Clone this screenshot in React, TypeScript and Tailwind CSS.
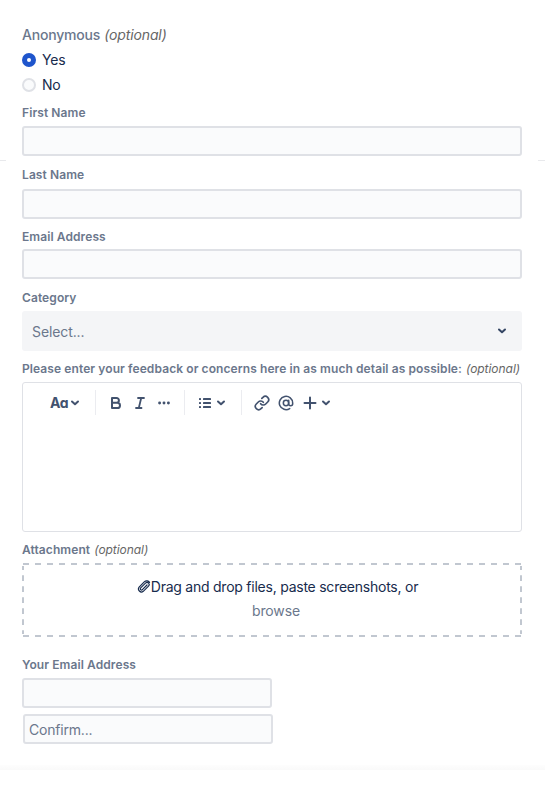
import React from "react";

function Label({ text, optional, className = "" }: { text: string; optional?: boolean; className?: string }) {
  return (
    <div className={`flex h-4 items-center gap-1 whitespace-nowrap text-[12px] leading-4 text-[#6b778c] ${className}`}>
      <span className="font-semibold tracking-[0.09px]">{text}</span>
      {optional && <span className="italic text-[#666] tracking-[-0.05px]">(optional)</span>}
    </div>
  );
}

function Field({ className = "", placeholder, label }: { className?: string; placeholder?: string; label: string }) {
  return (
    <input
      aria-label={label}
      placeholder={placeholder}
      className={`block h-[30px] rounded-[3px] border-2 border-[#dfe1e6] bg-[#fafbfc] px-1 text-[14px] tracking-[-0.2px] text-[#172b4d] outline-none placeholder:text-[#6b778c] ${className}`}
    />
  );
}

function Chevron({ className = "" }: { className?: string }) {
  return (
    <svg viewBox="0 0 10 8" className={`h-2 w-2.5 shrink-0 ${className}`} fill="none" stroke="currentColor" strokeWidth="2" strokeLinecap="round" strokeLinejoin="round">
      <path d="M2 2.5 5 5.3 8 2.5" />
    </svg>
  );
}

function Toolbar() {
  return (
    <div className="flex h-[25px] items-center text-[#42526e]">
      <span className="w-[20px] text-[14px] font-bold leading-5 tracking-[-0.6px]">Aɑ</span>
      <Chevron />
      <span className="ml-[15px] h-full w-px bg-[#ebecf0]" />
      <svg viewBox="0 0 14 14" className="ml-[13px] h-3.5 w-3.5" fill="none" stroke="currentColor" strokeWidth="2" strokeLinejoin="round">
        <path d="M3 2H7.5A2.4 2.4 0 0 1 7.5 6.8H3ZM3 6.8H8.4A2.6 2.6 0 0 1 8.4 12H3Z" />
      </svg>
      <svg viewBox="0 0 14 14" className="ml-[10px] h-3.5 w-3.5" fill="none" stroke="currentColor" strokeWidth="1.8" strokeLinecap="round">
        <path d="M5 2H11M3 12H8.5M8.2 2 5.8 12" />
      </svg>
      <svg viewBox="0 0 14 4" className="ml-[10px] h-1 w-3.5" fill="currentColor">
        <circle cx="2.6" cy="2" r="1.45" />
        <circle cx="7" cy="2" r="1.45" />
        <circle cx="11.4" cy="2" r="1.45" />
      </svg>
      <span className="ml-[13px] h-full w-px bg-[#ebecf0]" />
      <svg viewBox="0 0 14 12" className="ml-[13px] h-3 w-3.5" fill="currentColor">
        <rect x="1" y="1" width="2" height="2" rx=".6" />
        <rect x="1" y="5" width="2" height="2" rx=".6" />
        <rect x="1" y="9" width="2" height="2" rx=".6" />
        <rect x="5" y="1" width="8" height="2" rx=".6" />
        <rect x="5" y="5" width="8" height="2" rx=".6" />
        <rect x="5" y="9" width="8" height="2" rx=".6" />
      </svg>
      <Chevron className="ml-1" />
      <span className="ml-[15px] h-full w-px bg-[#ebecf0]" />
      <svg viewBox="0 0 24 24" className="ml-[12px] h-4 w-4" fill="none" stroke="currentColor" strokeWidth="2.5" strokeLinecap="round" strokeLinejoin="round">
        <path d="M10 13a5 5 0 0 0 7.54.54l3-3a5 5 0 0 0-7.07-7.07l-1.72 1.71" />
        <path d="M14 11a5 5 0 0 0-7.54-.54l-3 3a5 5 0 0 0 7.07 7.07l1.71-1.71" />
      </svg>
      <svg viewBox="0 0 24 24" className="ml-2 h-4 w-4" fill="none" stroke="currentColor" strokeWidth="2.3" strokeLinecap="round">
        <circle cx="12" cy="12" r="4" />
        <path d="M16 8v5a3 3 0 0 0 6 0v-1a10 10 0 1 0-4.5 8.3" />
      </svg>
      <svg viewBox="0 0 14 14" className="ml-[9px] h-3.5 w-3.5" fill="none" stroke="currentColor" strokeWidth="2" strokeLinecap="round">
        <path d="M7 1.5V12.5M1.5 7H12.5" />
      </svg>
      <Chevron className="ml-1" />
    </div>
  );
}

export default function App() {
  return (
    <main className="relative h-[800px] w-full overflow-hidden bg-white font-['Inter','Liberation_Sans',sans-serif]">
      <span className="absolute left-0 top-[160px] h-px w-1.5 bg-[#e8e9ec]" />
      <span className="absolute right-0 top-[160px] h-px w-[7px] bg-[#e8e9ec]" />
      <form className="flex h-[765px] flex-col pl-[22px] pr-[23px] pt-[25px]">
        <div className="flex h-5 items-center gap-1 text-[14px] leading-5">
          <span className="font-medium tracking-[-0.2px] text-[#6b778c]">Anonymous</span>
          <span className="italic tracking-[-0.12px] text-[#666]">(optional)</span>
        </div>
        <div className="mt-[5px] flex h-5 items-center gap-1.5 text-[14px] tracking-[-0.2px] text-[#172b4d]">
          <span className="h-3.5 w-3.5 rounded-full border-[5px] border-[#1f55cc] bg-white" />
          <span className="pb-0.5">Yes</span>
        </div>
        <div className="mt-[5px] flex h-5 items-center gap-1.5 text-[14px] tracking-[-0.2px] text-[#172b4d]">
          <span className="h-3.5 w-3.5 rounded-full border-2 border-[#dfe1e6] bg-[#fafbfc]" />
          <span className="pb-0.5">No</span>
        </div>
        <Label text="First Name" className="mt-[10px]" />
        <Field label="First Name" className="mt-[5px] w-full" />
        <Label text="Last Name" className="mt-[11px]" />
        <Field label="Last Name" className="mt-[6px] w-full" />
        <Label text="Email Address" className="mt-[10px]" />
        <Field label="Email Address" className="mt-[4px] w-full" />
        <Label text="Category" className="mt-[11px]" />
        <div className="mt-[5px] flex h-10 shrink-0 items-center justify-between rounded-[3px] bg-[#f4f5f7] pl-2.5 pr-[15px] text-[14px] tracking-[-0.1px] text-[#6b778c]">
          Select...
          <Chevron className="text-[#344563]" />
        </div>
        <Label text="Please enter your feedback or concerns here in as much detail as possible:" optional className="mt-[10px]" />
        <div className="mt-[5px] h-[150px] shrink-0 rounded-[3px] border border-[#dfe1e6] bg-white pl-[27px] pt-[7px]">
          <Toolbar />
        </div>
        <Label text="Attachment" optional className="mt-[10px]" />
        <div className="relative mt-[5px] flex h-[74px] shrink-0 flex-col items-center pt-[12px] text-[14px] leading-6 text-[#172b4d]">
          <svg viewBox="0 0 500 74" className="pointer-events-none absolute inset-0 h-full w-full" fill="none" stroke="#c1c7d0" strokeWidth="2">
            <path d="M1 1H499M1 73H499" strokeDasharray="6 6" strokeDashoffset="0" />
            <path d="M1 3V71M499 3V71" strokeDasharray="5.7 5.3" strokeDashoffset="1.7" />
          </svg>
          <div className="flex items-center pl-[11px]">
            <svg viewBox="0 0 14 14" className="h-3.5 w-3.5" fill="none" stroke="currentColor" strokeWidth="1.2" strokeLinecap="round">
              <path d="m10 5-4.6 4.6a1.2 1.2 0 0 1-1.7-1.7L8.5 3.1a2.1 2.1 0 0 1 3 3L6.3 11.3a3 3 0 0 1-4.2-4.2L7.5 1.7a3.2 3.2 0 0 1 5 .7" />
            </svg>
            <span className="tracking-[-0.24px]">Drag and drop files, paste screenshots, or</span>
          </div>
          <span className="pl-2 tracking-[-0.15px] text-[#6b778c]">browse</span>
        </div>
        <Label text="Your Email Address" className="mt-5" />
        <Field label="Your Email Address" className="mt-[5px] w-[250px]" />
        <Field label="Confirm email address" placeholder="Confirm..." className="ml-px mt-[6px] w-[250px]" />
      </form>
      <div className="h-[5px] bg-gradient-to-b from-[#fdfdfd] to-[#fafafa]" />
    </main>
  );
}
